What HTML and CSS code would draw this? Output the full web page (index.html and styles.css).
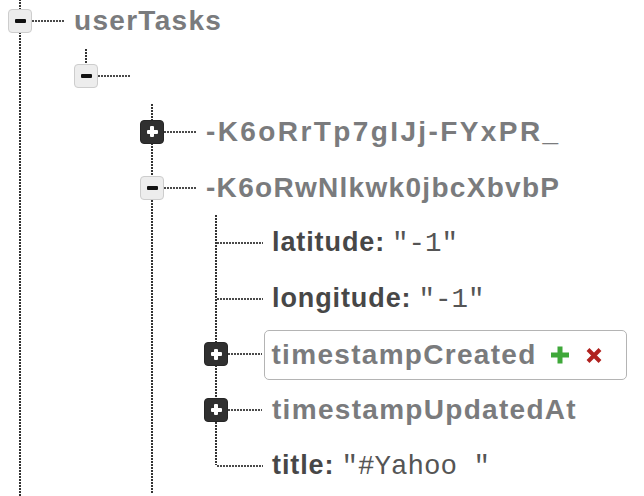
FILE: index.html
```html
<!DOCTYPE html>
<html>
<head>
<meta charset="utf-8">
<link rel="stylesheet" href="styles.css">
</head>
<body>
<div class="tree">
  <div class="row">
    <span class="toggle minus"></span><span class="hline h0"></span><span class="key">userTasks</span>
  </div>
  <div class="children c0">
    <div class="row">
      <span class="toggle minus"></span><span class="hline h0"></span>
    </div>
    <div class="children c1">
      <div class="row">
        <span class="toggle plus"></span><span class="hline h0"></span><span class="key wide">-K6oRrTp7gIJj-FYxPR_</span>
      </div>
      <div class="row">
        <span class="toggle minus"></span><span class="hline h0"></span><span class="key">-K6oRwNlkwk0jbcXbvbP</span>
      </div>
      <div class="children c2">
        <div class="row">
          <span class="hline h1"></span><span class="pair"><span class="label">latitude:</span><span class="value">"-1"</span></span>
        </div>
        <div class="row">
          <span class="hline h1"></span><span class="pair"><span class="label">longitude:</span><span class="value">"-1"</span></span>
        </div>
        <div class="row">
          <span class="toggle plus"></span><span class="hline h2"></span>
          <span class="selected"><span class="key">timestampCreated</span>
            <svg class="icon add" width="20" height="18" viewBox="0 0 20 18"><path d="M10 0.5v17M1 9h18" stroke="#3fa83a" stroke-width="5"/></svg>
            <svg class="icon del" width="18" height="17" viewBox="0 0 18 17"><path d="M3 2.5l12 12M15 2.5l-12 12" stroke="#b0221f" stroke-width="4"/></svg>
          </span>
        </div>
        <div class="row">
          <span class="toggle plus"></span><span class="hline h2"></span><span class="key k3">timestampUpdatedAt</span>
        </div>
        <div class="row">
          <span class="hline h1"></span><span class="pair"><span class="label">title:</span><span class="value">"#Yahoo "</span></span>
        </div>
      </div>
    </div>
  </div>
</div>
</body>
</html>
```

FILE: styles.css
```css
html, body {
  margin: 0;
  padding: 0;
  background: #fff;
  overflow: hidden;
}
body {
  width: 644px;
  height: 496px;
  font-family: "Liberation Sans", Arial, Helvetica, sans-serif;
}
.tree {
  margin-top: -7px;
  padding-left: 8px;
  height: 520px;
  background-image: repeating-linear-gradient(to bottom, #333 0 2px, transparent 2px 3px);
  background-repeat: no-repeat;
  background-size: 2px 100%;
  background-position: 19px 0;
}
.row {
  height: 55.6px;
  display: flex;
  align-items: center;
}
.children {
  padding-left: 66px;
  background-repeat: no-repeat;
  background-image: repeating-linear-gradient(to bottom, #333 0 2px, transparent 2px 3px);
}
.c0 {
  background-size: 2px 16px;
  background-position: 77px 0;
}
.c1 {
  background-size: 2px 400px;
  background-position: 77px 0;
}
.c2 {
  padding-left: 64px;
  background-size: 2px calc(100% - 27.8px);
  background-position: 75px 0;
}
.toggle {
  flex: none;
  width: 24px;
  height: 24px;
  box-sizing: border-box;
  border-radius: 4px;
  position: relative;
  display: flex;
  align-items: center;
  justify-content: center;
}
.toggle.minus {
  background: #ededed;
  border: 1.5px solid #cdcdcd;
}
.toggle.minus::before {
  content: "";
  width: 11px;
  height: 4px;
  background: #111;
  border-radius: 1px;
}
.toggle.plus {
  background: #303030;
  border: 1px solid #262626;
}
.toggle.plus::before,
.toggle.plus::after {
  content: "";
  position: absolute;
  background: #fff;
  border-radius: 1px;
}
.toggle.plus::before {
  width: 11px;
  height: 4px;
}
.toggle.plus::after {
  width: 4px;
  height: 11px;
}
.hline {
  flex: none;
  height: 2px;
  background-image: repeating-linear-gradient(to right, #4a4a4a 0 1.6px, transparent 1.6px 3px);
}
.h0 {
  width: 32px;
  margin-right: 10px;
}
.h1 {
  width: 46px;
  margin-left: 13px;
  margin-right: 9px;
}
.h2 {
  width: 34px;
  margin-right: 2px;
}
.key {
  font-weight: bold;
  font-size: 28px;
  letter-spacing: 1.3px;
  color: #7a7b7d;
  white-space: nowrap;
}
.key.wide {
  letter-spacing: 2.4px;
}
.k3 {
  margin-left: 8px;
}
.pair {
  white-space: pre;
}
.label {
  font-weight: bold;
  font-size: 27px;
  letter-spacing: 0.9px;
  color: #474747;
  margin-right: 7px;
}
.value {
  font-family: "Liberation Mono", "Courier New", monospace;
  font-size: 27.5px;
  color: #555;
}
.selected {
  display: flex;
  align-items: center;
  height: 50px;
  width: 363px;
  margin-top: 2px;
  box-sizing: border-box;
  border: 1.5px solid #b4b4b4;
  border-radius: 5px;
  padding-left: 6.5px;
}
.icon {
  flex: none;
}
.add {
  margin-left: 13px;
}
.del {
  margin-left: 15px;
}
```
